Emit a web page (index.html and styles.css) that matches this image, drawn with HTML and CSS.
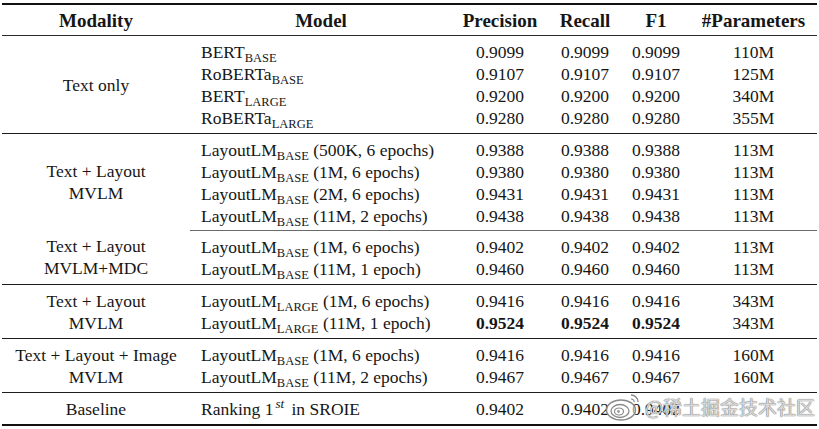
FILE: index.html
```html
<!DOCTYPE html>
<html lang="en">
<head>
<meta charset="utf-8">
<title>LayoutLM SROIE results</title>
<link rel="stylesheet" href="styles.css">
</head>
<body>
<div class="page">
  <table class="results">
    <colgroup>
      <col class="c-mod"><col class="c-model"><col class="c-p"><col class="c-r"><col class="c-f"><col class="c-par">
    </colgroup>
    <thead>
      <tr><th>Modality</th><th>Model</th><th>Precision</th><th>Recall</th><th>F1</th><th>#Parameters</th></tr>
    </thead>
    <tbody class="g">
      <tr class="first"><td rowspan="4" class="mod">Text only</td><td class="model">BERT<sub>BASE</sub></td><td>0.9099</td><td>0.9099</td><td>0.9099</td><td>110M</td></tr>
      <tr><td class="model">RoBERTa<sub>BASE</sub></td><td>0.9107</td><td>0.9107</td><td>0.9107</td><td>125M</td></tr>
      <tr><td class="model">BERT<sub>LARGE</sub></td><td>0.9200</td><td>0.9200</td><td>0.9200</td><td>340M</td></tr>
      <tr class="last"><td class="model">RoBERTa<sub>LARGE</sub></td><td>0.9280</td><td>0.9280</td><td>0.9280</td><td>355M</td></tr>
    </tbody>
    <tbody class="g">
      <tr class="first"><td rowspan="4" class="mod">Text + Layout<br>MVLM</td><td class="model">LayoutLM<sub>BASE</sub> (500K, 6 epochs)</td><td>0.9388</td><td>0.9388</td><td>0.9388</td><td>113M</td></tr>
      <tr><td class="model">LayoutLM<sub>BASE</sub> (1M, 6 epochs)</td><td>0.9380</td><td>0.9380</td><td>0.9380</td><td>113M</td></tr>
      <tr><td class="model">LayoutLM<sub>BASE</sub> (2M, 6 epochs)</td><td>0.9431</td><td>0.9431</td><td>0.9431</td><td>113M</td></tr>
      <tr class="last short"><td class="model">LayoutLM<sub>BASE</sub> (11M, 2 epochs)</td><td>0.9438</td><td>0.9438</td><td>0.9438</td><td>113M</td></tr>
    </tbody>
    <tbody class="sub">
      <tr class="first"><td rowspan="2" class="mod">Text + Layout<br>MVLM+MDC</td><td class="model rule">LayoutLM<sub>BASE</sub> (1M, 6 epochs)</td><td class="rule">0.9402</td><td class="rule">0.9402</td><td class="rule">0.9402</td><td class="rule">113M</td></tr>
      <tr class="last"><td class="model">LayoutLM<sub>BASE</sub> (11M, 1 epoch)</td><td>0.9460</td><td>0.9460</td><td>0.9460</td><td>113M</td></tr>
    </tbody>
    <tbody class="g">
      <tr class="first"><td rowspan="2" class="mod">Text + Layout<br>MVLM</td><td class="model">LayoutLM<sub>LARGE</sub> (1M, 6 epochs)</td><td>0.9416</td><td>0.9416</td><td>0.9416</td><td>343M</td></tr>
      <tr class="last"><td class="model">LayoutLM<sub>LARGE</sub> (11M, 1 epoch)</td><td><b>0.9524</b></td><td><b>0.9524</b></td><td><b>0.9524</b></td><td>343M</td></tr>
    </tbody>
    <tbody class="g">
      <tr class="first"><td rowspan="2" class="mod">Text + Layout + Image<br>MVLM</td><td class="model">LayoutLM<sub>BASE</sub> (1M, 6 epochs)</td><td>0.9416</td><td>0.9416</td><td>0.9416</td><td>160M</td></tr>
      <tr class="last"><td class="model">LayoutLM<sub>BASE</sub> (11M, 2 epochs)</td><td>0.9467</td><td>0.9467</td><td>0.9467</td><td>160M</td></tr>
    </tbody>
    <tbody class="g end">
      <tr class="first last"><td class="mod">Baseline</td><td class="model">Ranking 1<sup class="ord">st</sup> in SROIE</td><td>0.9402</td><td>0.9402</td><td>0.9402</td><td></td></tr>
    </tbody>
  </table>

  <div class="wm">
    <svg class="wm-logo" width="38" height="30" viewBox="0 0 38 30" aria-hidden="true">
      <ellipse cx="16" cy="18" rx="14.5" ry="10" fill="rgba(255,255,255,0.6)" stroke="#8a8a8a" stroke-width="1.4"/>
      <ellipse cx="15" cy="19" rx="9" ry="6.5" fill="none" stroke="#8a8a8a" stroke-width="1.3"/>
      <ellipse cx="14" cy="19.5" rx="4.5" ry="3.5" fill="none" stroke="#8a8a8a" stroke-width="1.2"/>
      <circle cx="13.5" cy="19.5" r="1.4" fill="#9a9a9a"/>
      <path d="M26 3 a7 7 0 0 1 7 7" fill="none" stroke="#8a8a8a" stroke-width="1.4"/>
      <path d="M26 7 a3.2 3.2 0 0 1 3.2 3.2" fill="none" stroke="#8a8a8a" stroke-width="1.2"/>
    </svg>
    <span class="wm-text">@稀土掘金技术社区</span>
  </div>
</div>
</body>
</html>
```

FILE: styles.css
```css
html, body {
  margin: 0;
  background: #ffffff;
}

body {
  font-family: "Liberation Serif", "Times New Roman", serif;
  color: #161616;
}

.page {
  position: relative;
  width: 815px;
  padding: 3px 0 0 2px;
}

.results {
  border-collapse: collapse;
  table-layout: fixed;
  width: 815px;
  font-size: 17.5px;
  line-height: 22px;
}

.c-mod { width: 188px; }
.c-model { width: 262px; }
.c-p { width: 96px; }
.c-r { width: 74px; }
.c-f { width: 68px; }
.c-par { width: 127px; }

.results th {
  font-size: 19px;
  font-weight: bold;
  text-align: center;
  padding: 5px 0 3px;
  border-top: 2px solid #111;
  border-bottom: 1px solid #2a2a2a;
  white-space: nowrap;
}

.results td {
  text-align: center;
  padding: 0;
  white-space: nowrap;
}

.results td.model {
  text-align: left;
  padding-left: 11px;
}

.results tr.first td { padding-top: 5px; }
.results tr.last td { padding-bottom: 4px; }
.results tr.last.short td { padding-bottom: 3px; }

.results td.mod,
.results tr.first td.mod {
  vertical-align: middle;
  padding: 0;
}

.results tbody.end tr.first td.mod {
  padding: 5px 0 4px;
}

.results tbody.g {
  border-top: 1px solid #1c1c1c;
}

.results tbody.end {
  border-bottom: 2px solid #111;
}

.results td.rule {
  border-top: 1px solid #6a6a6a;
}

.results b {
  font-weight: bold;
}

.results sub {
  font-size: 12.5px;
  line-height: 0;
  vertical-align: -4px;
}

.results sup.ord {
  font-size: 13px;
  font-style: italic;
  line-height: 0;
  vertical-align: 7px;
  margin-left: 2px;
  margin-right: 3px;
}

.wm {
  position: absolute;
  left: 605px;
  top: 392px;
  display: flex;
  align-items: center;
  gap: 2px;
  pointer-events: none;
}

.wm-logo {
  display: block;
}

.wm-text {
  font-family: "Noto Sans CJK SC", "Noto Sans", sans-serif;
  font-size: 19px;
  line-height: 28px;
  color: rgba(236, 236, 236, 0.85);
  text-shadow: 0 0 1px #6f6f6f, 0 0 1px #6f6f6f;
}
```
